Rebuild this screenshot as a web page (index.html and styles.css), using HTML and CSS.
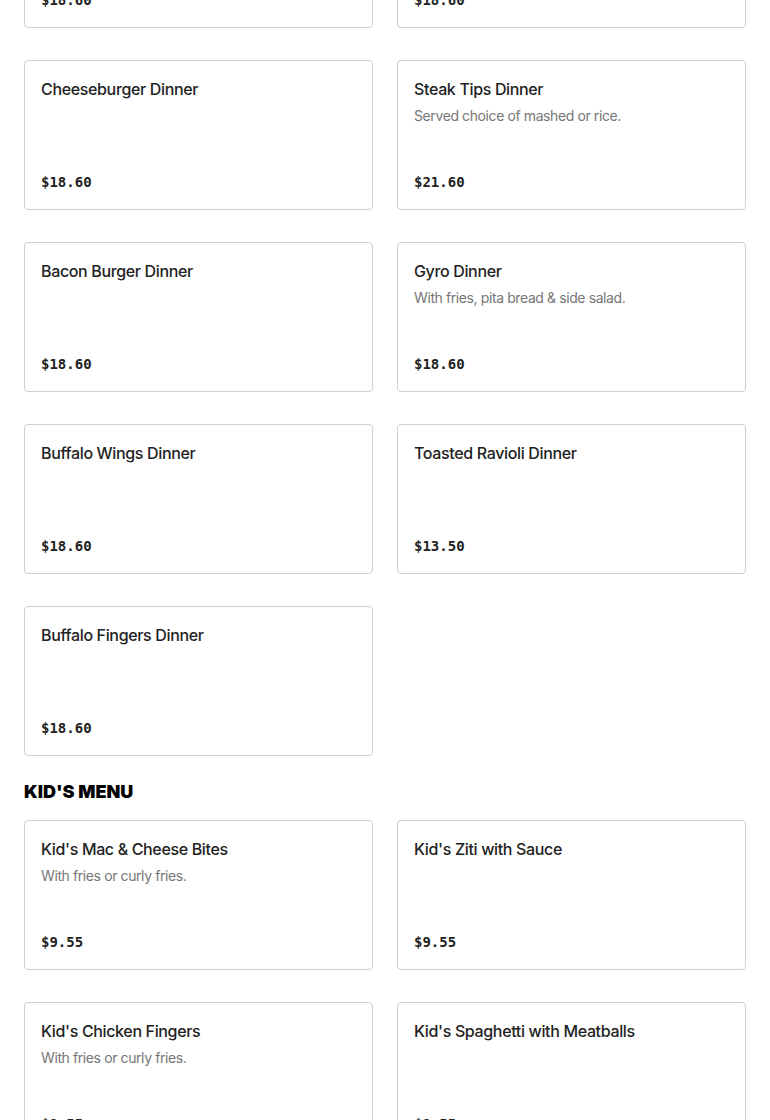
FILE: index.html
```html
<!DOCTYPE html>
<html lang="en">
<head>
<meta charset="utf-8">
<title>Menu</title>
<link rel="stylesheet" href="styles.css">
</head>
<body>
<main class="menu">
  <section class="section">
    <div class="grid">
      <div class="card"><div class="title">Hamburger Dinner</div><div class="price">$18.60</div></div>
      <div class="card"><div class="title">Chicken Fingers Dinner</div><div class="price">$18.60</div></div>
      <div class="card"><div class="title">Cheeseburger Dinner</div><div class="price">$18.60</div></div>
      <div class="card"><div class="title">Steak Tips Dinner</div><div class="desc">Served choice of mashed or rice.</div><div class="price">$21.60</div></div>
      <div class="card"><div class="title">Bacon Burger Dinner</div><div class="price">$18.60</div></div>
      <div class="card"><div class="title">Gyro Dinner</div><div class="desc">With fries, pita bread &amp; side salad.</div><div class="price">$18.60</div></div>
      <div class="card"><div class="title">Buffalo Wings Dinner</div><div class="price">$18.60</div></div>
      <div class="card"><div class="title">Toasted Ravioli Dinner</div><div class="price">$13.50</div></div>
      <div class="card"><div class="title">Buffalo Fingers Dinner</div><div class="price">$18.60</div></div>
    </div>
  </section>
  <section class="section">
    <h2 class="heading">KID'S MENU</h2>
    <div class="grid">
      <div class="card"><div class="title">Kid's Mac &amp; Cheese Bites</div><div class="desc">With fries or curly fries.</div><div class="price">$9.55</div></div>
      <div class="card"><div class="title">Kid's Ziti with Sauce</div><div class="price">$9.55</div></div>
      <div class="card"><div class="title">Kid's Chicken Fingers</div><div class="desc">With fries or curly fries.</div><div class="price">$9.55</div></div>
      <div class="card"><div class="title">Kid's Spaghetti with Meatballs</div><div class="price">$9.55</div></div>
    </div>
  </section>
</main>
</body>
</html>
```
FILE: styles.css
```css
html, body {
  margin: 0;
  padding: 0;
  background: #ffffff;
}
body {
  font-family: "Inter", "Liberation Sans", sans-serif;
  color: #222222;
  overflow: hidden;
}
.menu {
  margin-top: -122px;
  padding: 0 24px;
}
.grid {
  display: grid;
  grid-template-columns: 1fr 1fr;
  column-gap: 24px;
  row-gap: 32px;
}
.card {
  box-sizing: border-box;
  height: 150px;
  border: 1px solid #cfcfcf;
  border-radius: 4px;
  padding: 16px 16px 17px;
  display: flex;
  flex-direction: column;
}
.title {
  font-size: 16px;
  line-height: 24px;
  font-weight: 500;
  letter-spacing: -0.35px;
  color: #222222;
}
.desc {
  margin-top: 4px;
  font-size: 14px;
  line-height: 22px;
  letter-spacing: -0.4px;
  color: #767676;
}
.price {
  margin-top: auto;
  font-family: "DejaVu Sans Mono", "Liberation Mono", monospace;
  font-size: 14px;
  line-height: 20px;
  font-weight: 600;
  color: #222222;
}
.heading {
  margin: 24px 0 16px;
  font-size: 18px;
  line-height: 24px;
  font-weight: 900;
  color: #000000;
  letter-spacing: 0;
}
```
